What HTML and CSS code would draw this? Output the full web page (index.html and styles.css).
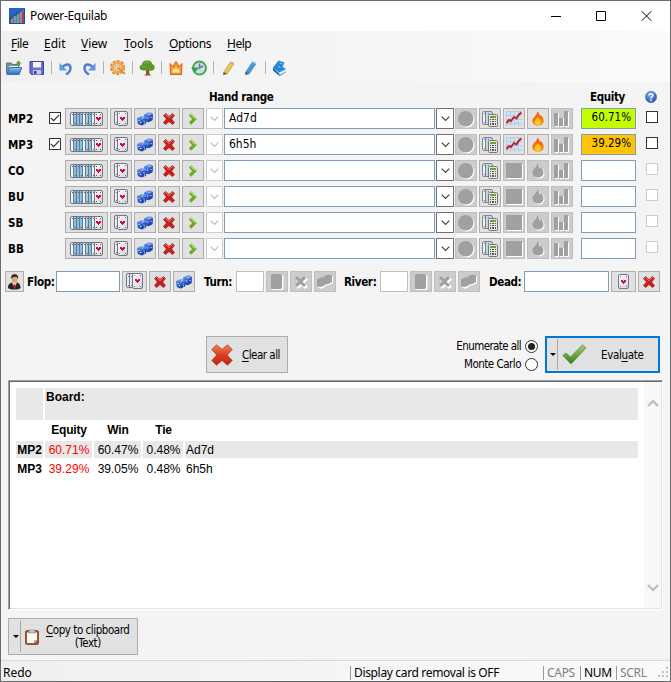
FILE: index.html
```html
<!DOCTYPE html>
<html lang="en">
<head>
<meta charset="utf-8">
<title>Power-Equilab</title>
<link rel="stylesheet" href="styles.css">
</head>
<body>
<svg class="defs" aria-hidden="true">
  <defs>
    <linearGradient id="gCard" x1="0" y1="0" x2="1" y2="1"><stop offset="0" stop-color="#fff"/><stop offset="1" stop-color="#c9d5e2"/></linearGradient>
    <linearGradient id="gRed" x1="0" y1="0" x2="0" y2="1"><stop offset="0" stop-color="#ef8356"/><stop offset=".5" stop-color="#d83f20"/><stop offset="1" stop-color="#c32410"/></linearGradient>
    <linearGradient id="gGreen" x1="0" y1="0" x2="0" y2="1"><stop offset="0" stop-color="#a5cd83"/><stop offset="1" stop-color="#357d1b"/></linearGradient>
    <linearGradient id="gFire" x1="0" y1="0" x2="0" y2="1"><stop offset="0" stop-color="#f04a10"/><stop offset="1" stop-color="#ff9a12"/></linearGradient>
    <linearGradient id="gBlue" x1="0" y1="0" x2="0" y2="1"><stop offset="0" stop-color="#8cc4f0"/><stop offset="1" stop-color="#2668b8"/></linearGradient>
    <linearGradient id="gDie" x1="0" y1="0" x2="0" y2="1"><stop offset="0" stop-color="#7fa4ee"/><stop offset=".45" stop-color="#3f6cd6"/><stop offset="1" stop-color="#1f45ae"/></linearGradient>
    <radialGradient id="gHelp" cx=".4" cy=".3" r=".8"><stop offset="0" stop-color="#7fa5ea"/><stop offset="1" stop-color="#1d47ad"/></radialGradient>
  </defs>
  <symbol id="card" viewBox="0 0 11 15"><rect x=".5" y=".5" width="10" height="14" rx="1.500" fill="url(#gCard)" stroke="#6f7787"/><path d="M3 6h2v1h1V6h2v2H7v1H6v1H5V9H4V8H3z" fill="#dc0b32"/><path d="M2 2h1v1H2zM8 2h1v1H8zM2 12h1v1H2zM8 12h1v1H8z" fill="#e04058"/></symbol>
  <symbol id="cards10" viewBox="0 0 33 14">
    <g stroke="#6f7787"><rect x=".5" y=".5" width="8" height="13" rx="1.500" fill="#f4f8fb"/><rect x="3.500" y=".5" width="8" height="13" rx="1.500" fill="#7cc4e8"/><rect x="6.500" y=".5" width="8" height="13" rx="1.500" fill="#7cc4e8"/><rect x="9.500" y=".5" width="8" height="13" rx="1.500" fill="#7cc4e8"/><rect x="12.500" y=".5" width="8" height="13" rx="1.500" fill="#eef5fa"/><rect x="15.500" y=".5" width="8" height="13" rx="1.500" fill="#9fd0ea"/><rect x="18.500" y=".5" width="8" height="13" rx="1.500" fill="#7cc4e8"/><rect x="21.500" y=".5" width="8" height="13" rx="1.500" fill="#eef5fa"/><rect x="24.500" y=".5" width="8" height="13" rx="1.500" fill="url(#gCard)"/></g>
    <path d="M2 2h1v1H2zM5 2h1v1H5zM8 2h1v1H8zM11 2h1v1h-1zM14 2h1v1h-1zM17 2h1v1h-1zM20 2h1v1h-1zM23 2h1v1h-1zM26 2h1v1h-1zM30 2h1v1h-1zM5 11h1v1H5zM11 11h1v1h-1zM17 11h1v1h-1zM23 11h1v1h-1zM26 11h1v1h-1zM30 11h1v1h-1z" fill="#a83450"/><path d="M26 5h2v1h1V5h2v2h-1v1h-1v1h-1V8h-1V7h-1z" fill="#dc0b32"/></symbol>
  <symbol id="cards2" viewBox="0 0 14 15"><rect x=".5" y=".5" width="8" height="13" rx="1.500" fill="#e6eef5" stroke="#6f7787"/><path d="M2 3h1v1H2zM2 11h1v1H2z" fill="#d05064"/><rect x="3.500" y=".5" width="10" height="14" rx="1.500" fill="url(#gCard)" stroke="#6f7787"/><path d="M6 6h2v1h1V6h2v2h-1v1H9v1H8V9H7V8H6z" fill="#dc0b32"/><path d="M5 2h1v1H5zM11 2h1v1h-1zM5 12h1v1H5zM11 12h1v1h-1z" fill="#e04058"/></symbol>
  <symbol id="cards3" viewBox="0 0 17 16"><rect x=".5" y=".5" width="8" height="14" rx="1.500" fill="#e6eef5" stroke="#6f7787"/><rect x="3.500" y=".5" width="8" height="14" rx="1.500" fill="#e6eef5" stroke="#6f7787"/><path d="M2 3h1v1H2zM5 3h1v1H5zM2 12h1v1H2zM5 12h1v1H5z" fill="#d05064"/><rect x="6.500" y=".5" width="10" height="15" rx="1.500" fill="url(#gCard)" stroke="#6f7787"/><path d="M9 6h2v1h1V6h2v2h-1v1h-1v1h-1V9h-1V8H9z" fill="#dc0b32"/><path d="M8 2h1v1H8zM14 2h1v1h-1zM8 13h1v1H8zM14 13h1v1h-1z" fill="#e04058"/></symbol>
  <symbol id="dice" viewBox="0 0 16 14"><path d="M7 2.500L11.500.3l3.500.4 1 1.500-.5 6-4 2L7.500 9z" fill="url(#gDie)"/><path d="M12.500 4L16 2l-.5 6-3.500 2z" fill="#183a9a" opacity=".6"/><path d="M0 6l4.500-2L9 5l1 1.500-1 5-4.500 2L.8 12z" fill="url(#gDie)"/><path d="M5.500 8L10 6l-1 5.500-4 2z" fill="#183a9a" opacity=".55"/><path d="M1.500 8h1v1h-1zM3 10h1v1H3zM6.500 8.500h1v1h-1zM7 10.500h1v1H7zM10 5.500h1v1h-1zM13.500 5h1v1h-1zM11.500 2h1v1h-1zM5 5.500h1v1H5z" fill="#eef3ff"/></symbol>
  <symbol id="x" viewBox="0 0 12 12"><path d="M2.500.5L6 3.500 9.500.5l2 2L8.500 6l3 3.500-2 2L6 8.500l-3.500 3-2-2L3.500 6l-3-3.500z" fill="#cd1c1c" stroke="#a31212" stroke-width=".7"/><path d="M1.500 2.500l1-1L6 4.700l3.500-3.200 1 1" fill="none" stroke="#ee8b82" stroke-width=".8"/></symbol>
  <symbol id="chev" viewBox="0 0 9 12"><path d="M1 1.500L5.500 6 1 10.500" fill="none" stroke="#6aab24" stroke-width="3.200"/><path d="M1.500 1L6 5.200" stroke="#afd878" stroke-width="1.200"/></symbol>
  <symbol id="down" viewBox="0 0 9 6"><path d="M.7.7l3.800 3.800L8.300.7" fill="none" stroke="currentColor" stroke-width="1.200"/></symbol>
  <symbol id="disc" viewBox="0 0 17 17"><circle cx="8.800" cy="8.800" r="7.700" fill="#fff"/><circle cx="7.700" cy="7.700" r="7.700" fill="#a0a0a0"/></symbol>
  <symbol id="calc" viewBox="0 0 17 16"><rect x=".5" y=".5" width="6" height="13" rx="1.500" fill="#edf2f6" stroke="#80868e"/><rect x="3.500" y=".5" width="7" height="13" rx="1.500" fill="#b7d9ea" stroke="#80868e"/><path d="M2 2h1v1H2zM2 11h1v1H2zM6 2h1v1H6z" fill="#d4596a"/><rect x="6.500" y="3.500" width="9" height="12" rx="1" fill="#e8e8e2" stroke="#777"/><path d="M8 5h6v2H8z" fill="#6ba52e"/><path d="M8 8h1v1H8zM10 8h2v1h-2zM13 8h1v1h-1zM8 10h1v1H8zM10 10h2v1h-2zM13 10h1v1h-1zM8 12h1v2H8zM10 12h2v2h-2zM13 12h1v2h-1z" fill="#555"/></symbol>
  <symbol id="chart" viewBox="0 0 16 15"><path d="M0 0h16v15H0z" fill="#d3e2f2"/><path d="M0 .5h16M0 4.500h16M0 8.500h16M0 12.500h16M.5 0v15M4.500 0v15M8.500 0v15M12.500 0v15" stroke="#b4c9e0" stroke-width=".9"/><path d="M.5 12l2.500-3 2 1 3-4 2.500 1.500L13 3.500l2.500-2" fill="none" stroke="#bb2429" stroke-width="2"/></symbol>
  <symbol id="fire" viewBox="0 0 12 15"><path d="M5.500.3c.8 1.700 2.200 2.500 2.300 5L9 4c.4 1.300 2.700 2.500 2.700 6 0 2.800-2.500 4.700-5.700 4.700S.3 12.800.3 10c0-4 4.700-4.500 5.200-9.700z" fill="url(#gFire)"/><path d="M5.500 6c1 1.500 3.500 2.500 3.500 5 0 1.800-1.200 3-3 3s-3.200-1-3.200-3c0-2.200 2.200-2.800 2.700-5z" fill="#ffcd22"/></symbol>
  <symbol id="square0" viewBox="0 0 17 16"><path d="M1 1h16v15H1z" fill="#fff"/><path d="M0 0h16v15H0z" fill="#a0a0a0"/></symbol>
  <symbol id="fire0" viewBox="0 0 13 16"><path d="M6.500 1.500c1 2 2 2.500 2.300 4.500l1.700-1c.5 1.500 2 2.500 2 5.500 0 3-2.500 5-5.500 5S1.500 13.500 1.500 10.500c0-4 4.500-4.500 5-9z" fill="#fff"/><path d="M5.500.3c1.200 1.700 2 3 2 5.500L9.500 4c.3 2 2 2.500 2 5.500 0 3-2.500 5-5.500 5S.5 12.500.5 9.500c0-4 4.500-4.500 5-9.200z" fill="#a0a0a0"/></symbol>
  <symbol id="bars0" viewBox="0 0 16 16"><path d="M1 2h4v14H1zM6 7h4v9H6zM11 1h4v15h-4z" fill="#fff"/><path d="M0 2h4v13H0zM5 7h4v8H5zM10 0h4v15h-4z" fill="#a0a0a0"/></symbol>
  <symbol id="card0" viewBox="0 0 13 16"><rect x="1" y="1" width="11.500" height="15" rx="2" fill="#fff"/><rect x="0" y="0" width="11" height="15" rx="2" fill="#a0a0a0"/></symbol>
  <symbol id="x0" viewBox="0 0 14 14"><path d="M3 1l3.500 3L10 1l3 2.500L9.500 7l3.500 3.500-3 2.500-3.500-3L3 13l-2-2.500L4.500 7 1 3.500z" fill="#fff" transform="translate(1 1)"/><path d="M3 1l3.500 3L10 1l2 2.500L8.500 6.500 12 10l-2 2-3.500-3L3 12l-2-2 3.500-3.500L1 3.500z" fill="#a0a0a0"/></symbol>
  <symbol id="dice0" viewBox="0 0 18 15"><path d="M1 5.500l4-2h2.500L9 1.500l4-1 3 1.500v6L12.500 10 9 10.500 8 12l-4 2-3-2z" fill="#fff" transform="translate(1 1)"/><path d="M1 5.500l4-2h2.500L9 1.500l4-1 3 1.500v6L12.500 10 9 10.500 8 12l-4 1-3-1z" fill="#a0a0a0"/></symbol>
  <symbol id="tick" viewBox="0 0 10 8"><path d="M.8 3.800l2.800 2.900L9.200.8" fill="none" stroke="#333" stroke-width="1.200"/></symbol>
</svg>

<div class="window">
  <header class="titlebar">
    <svg class="logo" width="16" height="16" viewBox="0 0 16 16"><path d="M0 0h16v16H0z" fill="#1c4d9c"/><path d="M0 0h16L0 10z" fill="#2b65c0"/><path d="M1 12l4-4 3-1 3-3 4-3v14H1z" fill="#66788a"/><path d="M3 11v4M6 8v7M9 6v9M12 4v11" stroke="#9fb0b8"/><path d="M1 13h1v2H1zM13 4h2v11h-2z" fill="#b9394a"/><path d="M7 9h1v5H7z" fill="#3ba084"/></svg>
    <span class="title">Power-Equilab</span>
    <div class="winbtns">
      <svg width="10" height="10"><path d="M0 5.500h10" stroke="#000"/></svg>
      <svg width="10" height="10"><path d="M.5.5h9v9h-9z" fill="none" stroke="#000"/></svg>
      <svg width="11" height="10"><path d="M.8.3l9.400 9.400M10.200.3L.8 9.700" stroke="#000"/></svg>
    </div>
  </header>
  <nav class="menubar"><span class="m1"><u>F</u>ile</span><span class="m2"><u>E</u>dit</span><span class="m3"><u>V</u>iew</span><span class="m4"><u>T</u>ools</span><span class="m5"><u>O</u>ptions</span><span class="m6"><u>H</u>elp</span></nav>
  <div class="toolbar">
    <svg class="i16" viewBox="0 0 16 16"><path d="M.5 13V3h5l1 1.500h6V13z" fill="#7b909c" stroke="#5c7482"/><path d="M3 6h9v5H3z" fill="#eef4f8"/><path d="M.8 14.500L3.500 7.500h12.200l-2.500 7z" fill="url(#gBlue)" stroke="#3473ad"/><path d="M12.500.5l3 3H14V6h-3V3.500H9.500z" fill="#6d9c36"/></svg>
    <svg class="i16 save" viewBox="0 0 16 16"><path d="M1 1.500h13.500v13H2.500L1 13z" fill="#6a6ecb" stroke="#3b3f9e"/><path d="M4 2h8v5.500H4z" fill="#f4f5fd"/><path d="M4 10h8v4.500H4z" fill="#c8cbef"/><path d="M5 11h2.500v3H5z" fill="#3c3f8f"/></svg>
    <i class="sep"></i>
    <svg class="i16" viewBox="0 0 16 16"><path d="M4 7.500C7 3.500 12.500 3 12.500 8c0 3-2 5-4.500 6.500" fill="none" stroke="#4a80d8" stroke-width="2.500"/><path d="M1.500 3v7.500H9z" fill="#5f96e6"/></svg>
    <svg class="i16 redo" viewBox="0 0 16 16"><path d="M12 7.500C9 3.500 3.500 3 3.500 8c0 3 2 5 4.500 6.500" fill="none" stroke="#4a80d8" stroke-width="2.500"/><path d="M14.500 3v7.500H7z" fill="#5f96e6"/></svg>
    <i class="sep"></i>
    <svg class="i16" viewBox="0 0 16 16"><circle cx="7.500" cy="7.500" r="6.600" fill="none" stroke="#d6872d" stroke-width="1.800" stroke-dasharray="3 1.300"/><circle cx="7.500" cy="7.500" r="4.900" fill="#fff4dd" stroke="#efa64c" stroke-width="2.600"/><circle cx="7.500" cy="7.500" r="2.700" fill="#f4f4f4" stroke="#be762a" stroke-width=".8"/><path d="M7 7l8 7" stroke="#dd8e32" stroke-width="2"/></svg>
    <i class="sep"></i>
    <svg class="i16" viewBox="0 0 16 16"><path d="M7 8h3l.5 6 2 1.500H5L7 14z" fill="#8d562a"/><path d="M3 4.500C3 1.500 6 .2 8 .6c3-.5 5 1 5 3.400 3.600 1 3.500 6 0 6.500-2 .8-3-.5-5-.3-2.500.8-7 .3-7.500-2.500C.3 5.700 2 5 3 4.500z" fill="#5d9628"/><path d="M5 4c1-2 5-2.500 6-.5M3 7c2-1 3 0 4 0" fill="none" stroke="#85bb48"/></svg>
    <i class="sep"></i>
    <svg class="i16 crown" viewBox="0 0 16 16"><path d="M2.500 14.500L2 3.500l2.800 3L8 1.500l3.200 5 2.800-3-.5 11z" fill="#f49831" stroke="#d9601a"/><path d="M4.500 12.500c-.5-2 1-4 1-4l1 1.500L8 6.500 9.500 10l1-1.500c1 1 1.500 3 1 4z" fill="#fff0a0"/></svg>
    <svg class="i16" viewBox="0 0 16 16"><circle cx="8.500" cy="8" r="6.500" fill="#c9dce8" stroke="#4ba553" stroke-width="2"/><path d="M8.500 3.500V8l3.500-2" fill="none" stroke="#637c93" stroke-width="1.500"/><path d="M0 7.500h8L4 12.500z" fill="#35a548"/></svg>
    <i class="sep wsep"></i>
    <svg class="i16" viewBox="0 0 16 16"><path d="M3.500 12.500L10.500 2l3.200 2L7 14z" fill="#f0c544" stroke="#a99255" stroke-width=".7"/><path d="M10 2.800l1-1.500 3 1.800-1 1.500z" fill="#d8a0a0"/><path d="M3 15l.8-3L7 14z" fill="#4f4b44"/></svg>
    <svg class="i16 pen2" viewBox="0 0 16 16"><path d="M3.500 12.500L10.500 2l3.200 2L7 14z" fill="#439be4" stroke="#4279a9" stroke-width=".7"/><path d="M10 2.800l1-1.500 3 1.800-1 1.500z" fill="#82b5df"/><path d="M3 15l.8-3L7 14z" fill="#494b55"/></svg>
    <i class="sep bsep"></i>
    <svg class="i16" viewBox="0 0 16 16"><path d="M1 7.500l5.500 5.500L14 9.500v2.500l-6.500 4L1 10.500z" fill="#1667a8"/><path d="M7 12.700l7-3.200v2L7.500 15z" fill="#eef7ff"/><path d="M6.500.5L12.500 2.500 10.500 7 14 9l-7 3.500L1 7.500z" fill="#2288d6"/><path d="M7.500 3l3 1M6 6.500l2.500 1" stroke="#8fcbf3"/></svg>
  </div>

  <main class="content">
    <div class="heads"><b class="h-range">Hand range</b><b class="h-eq">Equity</b><svg width="12" height="12" viewBox="0 0 12 12"><circle cx="6" cy="6" r="5.700" fill="url(#gHelp)" stroke="#4169b6" stroke-width=".5"/><path d="M4 4.500C4 2 8 2.200 8 4.200 8 5.800 6 5.500 6 7.400M6 8.600v1.400" fill="none" stroke="#fff" stroke-width="1.500"/></svg></div>

    <div class="row"><b class="pos">MP2</b><span class="cb on"><svg><use href="#tick"/></svg></span>
      <span class="btn wide"><svg class="c10"><use href="#cards10"/></svg></span><span class="btn"><svg class="c2"><use href="#cards2"/></svg></span><span class="btn"><svg class="dice"><use href="#dice"/></svg></span><span class="btn"><svg class="x"><use href="#x"/></svg></span><span class="btn"><svg class="chev"><use href="#chev"/></svg></span><span class="drop off"><svg><use href="#down"/></svg></span><span class="field range">Ad7d</span><span class="drop"><svg><use href="#down"/></svg></span><span class="btn dis"><svg class="s17"><use href="#disc"/></svg></span><span class="btn"><svg class="calc"><use href="#calc"/></svg></span><span class="btn"><svg class="chart"><use href="#chart"/></svg></span><span class="btn"><svg class="fire"><use href="#fire"/></svg></span><span class="btn dis"><svg class="s16"><use href="#bars0"/></svg></span><span class="field eq green">60.71%</span><span class="cb last on"></span></div>
    <div class="row"><b class="pos">MP3</b><span class="cb on"><svg><use href="#tick"/></svg></span>
      <span class="btn wide"><svg class="c10"><use href="#cards10"/></svg></span><span class="btn"><svg class="c2"><use href="#cards2"/></svg></span><span class="btn"><svg class="dice"><use href="#dice"/></svg></span><span class="btn"><svg class="x"><use href="#x"/></svg></span><span class="btn"><svg class="chev"><use href="#chev"/></svg></span><span class="drop off"><svg><use href="#down"/></svg></span><span class="field range">6h5h</span><span class="drop"><svg><use href="#down"/></svg></span><span class="btn dis"><svg class="s17"><use href="#disc"/></svg></span><span class="btn"><svg class="calc"><use href="#calc"/></svg></span><span class="btn"><svg class="chart"><use href="#chart"/></svg></span><span class="btn"><svg class="fire"><use href="#fire"/></svg></span><span class="btn dis"><svg class="s16"><use href="#bars0"/></svg></span><span class="field eq orange">39.29%</span><span class="cb last on"></span></div>
    <div class="row"><b class="pos">CO</b><span class="cb none"></span>
      <span class="btn wide"><svg class="c10"><use href="#cards10"/></svg></span><span class="btn"><svg class="c2"><use href="#cards2"/></svg></span><span class="btn"><svg class="dice"><use href="#dice"/></svg></span><span class="btn"><svg class="x"><use href="#x"/></svg></span><span class="btn"><svg class="chev"><use href="#chev"/></svg></span><span class="drop off"><svg><use href="#down"/></svg></span><span class="field range"></span><span class="drop"><svg><use href="#down"/></svg></span><span class="btn dis"><svg class="s17"><use href="#disc"/></svg></span><span class="btn"><svg class="calc"><use href="#calc"/></svg></span><span class="btn dis"><svg class="sq"><use href="#square0"/></svg></span><span class="btn dis"><svg class="fire0"><use href="#fire0"/></svg></span><span class="btn dis"><svg class="s16"><use href="#bars0"/></svg></span><span class="field eq"></span><span class="cb last"></span></div>
    <div class="row"><b class="pos">BU</b><span class="cb none"></span>
      <span class="btn wide"><svg class="c10"><use href="#cards10"/></svg></span><span class="btn"><svg class="c2"><use href="#cards2"/></svg></span><span class="btn"><svg class="dice"><use href="#dice"/></svg></span><span class="btn"><svg class="x"><use href="#x"/></svg></span><span class="btn"><svg class="chev"><use href="#chev"/></svg></span><span class="drop off"><svg><use href="#down"/></svg></span><span class="field range"></span><span class="drop"><svg><use href="#down"/></svg></span><span class="btn dis"><svg class="s17"><use href="#disc"/></svg></span><span class="btn"><svg class="calc"><use href="#calc"/></svg></span><span class="btn dis"><svg class="sq"><use href="#square0"/></svg></span><span class="btn dis"><svg class="fire0"><use href="#fire0"/></svg></span><span class="btn dis"><svg class="s16"><use href="#bars0"/></svg></span><span class="field eq"></span><span class="cb last"></span></div>
    <div class="row"><b class="pos">SB</b><span class="cb none"></span>
      <span class="btn wide"><svg class="c10"><use href="#cards10"/></svg></span><span class="btn"><svg class="c2"><use href="#cards2"/></svg></span><span class="btn"><svg class="dice"><use href="#dice"/></svg></span><span class="btn"><svg class="x"><use href="#x"/></svg></span><span class="btn"><svg class="chev"><use href="#chev"/></svg></span><span class="drop off"><svg><use href="#down"/></svg></span><span class="field range"></span><span class="drop"><svg><use href="#down"/></svg></span><span class="btn dis"><svg class="s17"><use href="#disc"/></svg></span><span class="btn"><svg class="calc"><use href="#calc"/></svg></span><span class="btn dis"><svg class="sq"><use href="#square0"/></svg></span><span class="btn dis"><svg class="fire0"><use href="#fire0"/></svg></span><span class="btn dis"><svg class="s16"><use href="#bars0"/></svg></span><span class="field eq"></span><span class="cb last"></span></div>
    <div class="row"><b class="pos">BB</b><span class="cb none"></span>
      <span class="btn wide"><svg class="c10"><use href="#cards10"/></svg></span><span class="btn"><svg class="c2"><use href="#cards2"/></svg></span><span class="btn"><svg class="dice"><use href="#dice"/></svg></span><span class="btn"><svg class="x"><use href="#x"/></svg></span><span class="btn"><svg class="chev"><use href="#chev"/></svg></span><span class="drop off"><svg><use href="#down"/></svg></span><span class="field range"></span><span class="drop"><svg><use href="#down"/></svg></span><span class="btn dis"><svg class="s17"><use href="#disc"/></svg></span><span class="btn"><svg class="calc"><use href="#calc"/></svg></span><span class="btn dis"><svg class="sq"><use href="#square0"/></svg></span><span class="btn dis"><svg class="fire0"><use href="#fire0"/></svg></span><span class="btn dis"><svg class="s16"><use href="#bars0"/></svg></span><span class="field eq"></span><span class="cb last"></span></div>

    <div class="board">
      <span class="btn person"><svg class="man" viewBox="0 0 13 16"><path d="M0 14c0-4 2-5 4-5.500h5c2 .5 3.500 2 3.500 5.500-2 2-10 2-12.500 0z" fill="#252525"/><path d="M4.500 7.500h4L8.500 10l-2 3-2-3z" fill="#f4d3b8"/><path d="M6 10h1l.5 4-1 1-1-1z" fill="#c12727"/><ellipse cx="6.600" cy="5" rx="2.900" ry="3.800" fill="#dda57c"/><path d="M3.300 5C2.500 1 5 0 7 .3c3 0 3.500 2.500 2.800 4.500L8.500 2.700 5 3z" fill="#3b2518"/></svg></span>
      <b class="flop">Flop:</b><span class="field w64"></span>
      <span class="btn w25 g2"><svg class="c3s"><use href="#cards3"/></svg></span><span class="btn g2"><svg class="x"><use href="#x"/></svg></span><span class="btn g2"><svg class="dice"><use href="#dice"/></svg></span>
      <b class="turn">Turn:</b><span class="field dim w28"></span>
      <span class="btn dis g2"><svg class="k0"><use href="#card0"/></svg></span><span class="btn dis g2"><svg class="x0"><use href="#x0"/></svg></span><span class="btn dis g2"><svg class="d0"><use href="#dice0"/></svg></span>
      <b class="river">River:</b><span class="field dim w28"></span>
      <span class="btn dis g2"><svg class="k0"><use href="#card0"/></svg></span><span class="btn dis g2"><svg class="x0"><use href="#x0"/></svg></span><span class="btn dis g2"><svg class="d0"><use href="#dice0"/></svg></span>
      <b class="dead">Dead:</b><span class="field w85"></span>
      <span class="btn w25 g2"><svg class="c1s"><use href="#card"/></svg></span><span class="btn g2"><svg class="x"><use href="#x"/></svg></span>
    </div>

    <div class="actions">
      <span class="big clear"><svg width="22" height="22" viewBox="0 0 22 22"><path d="M5.500.8L11 5.500 16.500.8l4.700 4.700-5 5.500 5 5.500-4.700 4.700L11 16.500l-5.500 4.700-4.700-4.700 5-5.500-5-5.500z" fill="url(#gRed)" stroke="#b93b20" stroke-width=".8"/></svg><span><u>C</u>lear all</span></span>
      <div class="modes"><label><span class="enum">Enumerate all</span><i class="radio sel"></i></label><label><span class="monte">Monte Carlo</span><i class="radio"></i></label></div>
      <span class="big eval"><i class="arrow"></i><i class="split"></i><svg width="25" height="21" viewBox="0 0 25 21"><path d="M.8 11.500L4 9l4.500 4L20.500.8 24 4 9 20z" fill="url(#gGreen)" stroke="#518a34" stroke-width=".7"/></svg><span>Eval<u>u</u>ate</span></span>
    </div>

    <section class="report">
      <div class="sheet">
        <div class="trow brow"><b class="c0 g"></b><b class="cw g">Board:</b></div>
        <div class="trow hrow"><b class="c0"></b><b class="c1">Equity</b><b class="c2x">Win</b><b class="c3">Tie</b></div>
        <div class="trow"><b class="c0 g">MP2</b><span class="c1 g red">60.71%</span><span class="c2x g">60.47%</span><span class="c3 g">0.48%</span><span class="c4 g">Ad7d</span></div>
        <div class="trow"><b class="c0">MP3</b><span class="c1 red">39.29%</span><span class="c2x">39.05%</span><span class="c3">0.48%</span><span class="c4">6h5h</span></div>
      </div>
      <div class="scroll"><svg width="12" height="8" viewBox="0 0 12 8"><path d="M1 7l5-5 5 5" fill="none" stroke="#bfbfbf" stroke-width="2.400"/></svg><svg width="12" height="8" viewBox="0 0 12 8"><path d="M1 1l5 5 5-5" fill="none" stroke="#bfbfbf" stroke-width="2.400"/></svg></div>
    </section>

    <span class="big copy"><i class="arrow"></i><i class="split"></i><svg width="14" height="16" viewBox="0 0 14 16"><rect x=".5" y="1.500" width="13" height="14" rx="1.500" fill="#a65a28" stroke="#8a5330"/><path d="M2 3.500h10V11l-3 3H2z" fill="#f7f7f7"/><path d="M12 11l-3 3v-3z" fill="#b9b9b9"/><path d="M4 1h6v3H4z" fill="#ccc" stroke="#888" stroke-width=".7"/></svg><span class="lines"><span class="l1"><u>C</u>opy to clipboard</span><span class="l2">(Text)</span></span></span>
  </main>

  <footer class="status"><span class="s-main">Redo</span><span class="s-card">Display card removal is OFF</span><span class="s-caps">CAPS</span><span class="s-num">NUM</span><span class="s-scrl">SCRL</span><svg width="11" height="11" viewBox="0 0 11 11"><path d="M8 0h2v2H8zM4 4h2v2H4zM8 4h2v2H8zM0 8h2v2H0zM4 8h2v2H4zM8 8h2v2H8z" fill="#bfbfbf"/></svg></footer>
</div>
</body>
</html>
```
FILE: styles.css
```css
* { box-sizing: border-box; }
body { margin: 0; background: #f4f4f4; color: #000; font: 11.5px/14px "DejaVu Sans Condensed", "DejaVu Sans", sans-serif; }
svg { display: block; flex: none; }
i, u { font-style: normal; }
u { text-underline-offset: 2px; text-decoration-thickness: 1px; }
b { letter-spacing: -.35px; }
.defs { position: absolute; width: 0; height: 0; }
.window { width: 671px; height: 682px; border: 1px solid #6b6b6b; display: flex; flex-direction: column; background: #f4f4f4; white-space: nowrap; overflow: hidden; }

.titlebar { height: 30px; background: #fff; display: flex; align-items: center; padding-left: 8px; font: 12px/16px "Noto Sans", sans-serif; }
.title { margin-left: 5px; letter-spacing: -.3px; }
.winbtns { margin-left: auto; margin-right: 18px; display: flex; gap: 35px; align-items: center; }

.menubar { height: 26px; background: linear-gradient(90deg, #f0f0f0, #fafafa); display: flex; padding-left: 10px; font: 12px/26px "Noto Sans", sans-serif; }
.menubar span { flex: none; }
.m1 { width: 33px; letter-spacing: -.5px; } .m2 { width: 37px; } .m3 { width: 43px; } .m4 { width: 45px; } .m5 { width: 58px; letter-spacing: -.35px; } .m6 { letter-spacing: -.5px; }

.toolbar { height: 25px; background: linear-gradient(90deg, #f0f0f0, #fafafa); display: flex; align-items: center; padding: 0 0 4px 5px; }
.i16 { width: 16px; height: 16px; }
.save { margin-left: 7px; }
.sep { width: 1px; height: 13px; background: #b4b4b4; margin: 0 6px; }
.redo { margin-left: 7px; }
.crown + .i16 { margin-left: 7px; }
.pen2 { margin-left: 6px; }
.bsep { margin-left: 7px; }

.heads { height: 26px; display: flex; align-items: center; padding: 4px 0 0 208px; }
.h-range { width: 381px; } .h-eq { width: 55px; }

.row { height: 21px; margin-bottom: 5px; display: flex; padding-left: 7px; }
.pos { width: 41px; line-height: 22px; flex: none; letter-spacing: 0; }
.cb { width: 12px; height: 12px; margin-top: 4px; margin-right: 4px; border: 1px solid #ccc; background: #fff; flex: none; display: flex; align-items: center; justify-content: center; }
.cb.on { border-color: #333; }
.cb.none { visibility: hidden; }
.cb svg { width: 10px; height: 8px; }
.cb.last { margin: 3px 0 0 10px; }
.btn { width: 22px; height: 21px; border: 1px solid #adadad; background: #e1e1e1; display: flex; align-items: flex-start; justify-content: center; flex: none; margin-right: 2px; }
.btn.dis { background: #ccc; border-color: #bfbfbf; }
.btn.wide { width: 43px; }
.drop { width: 18px; border: 1px solid #707070; background: #fff; color: #444; display: flex; align-items: center; justify-content: center; flex: none; margin: 0 1px; }
.drop.off { width: 17px; margin: 0 1px 0 0; border-color: #ccc; color: #bbb; }
.drop svg { width: 9px; height: 6px; }
.field { border: 1px solid #7f9db9; background: #fff; height: 21px; flex: none; }
.range { width: 211px; padding-left: 4px; line-height: 18px; font-size: 12px; }
.eq { width: 55px; margin-left: 6px; padding-right: 4px; text-align: right; line-height: 17px; }
.green { background: #c3ff00; }
.orange { background: #ffc400; }
.c10 { width: 33px; height: 14px; margin-top: 3px; }
.c2 { width: 14px; height: 15px; margin-top: 2px; }
.dice { width: 16px; height: 14px; margin-top: 3px; }
.x { width: 12px; height: 12px; margin-top: 4px; }
.chev { width: 9px; height: 12px; margin: 4px 0 0 1px; }
.s17 { width: 17px; height: 17px; margin: 2px 0 0 1px; }
.calc { width: 17px; height: 16px; margin: 2px 0 0 1px; }
.chart { width: 16px; height: 15px; margin-top: 2px; }
.fire { width: 12px; height: 15px; margin-top: 2px; }
.s16 { width: 16px; height: 16px; margin-top: 2px; }
.sq { width: 17px; height: 16px; margin: 2px 0 0 1px; }
.fire0 { width: 13px; height: 16px; margin: 2px 0 0 1px; }
.k0 { width: 13px; height: 16px; margin: 2px 0 0 1px; }
.x0 { width: 14px; height: 14px; margin-top: 3px; }
.d0 { width: 18px; height: 15px; margin-top: 2px; }
.man { width: 13px; height: 16px; margin-top: 2px; }
.c3s { width: 17px; height: 16px; margin-top: 1px; }
.c1s { width: 11px; height: 15px; margin-top: 2px; }

.board { height: 21px; margin-top: 12px; padding-left: 4px; display: flex; line-height: 22px; }
.board .btn { margin-right: 0; }
.board b { flex: none; }
.board .person { width: 19px; }
.board .g2 { margin-left: 2px; }
.board .w25 { width: 25px; } .w64 { width: 64px; } .w28 { width: 28px; } .w85 { width: 85px; }
.dim { border-color: #bfbfbf; }
.flop { width: 29px; margin-left: 3px; } .turn { width: 32px; margin-left: 9px; }
.river { width: 36px; margin-left: 8px; } .dead { width: 35px; margin-left: 9px; }

.actions { margin-top: 44px; height: 37px; display: flex; padding-left: 205px; letter-spacing: -.5px; }
.big { display: flex; align-items: center; height: 37px; border: 1px solid #adadad; background: #e1e1e1; flex: none; }
.clear { width: 82px; padding-left: 4px; }
.clear > span { margin-left: 9px; }
.modes { width: 250px; padding-top: 1px; display: flex; flex-direction: column; }
.modes label { height: 19px; display: flex; align-items: center; justify-content: flex-end; gap: 4px; }
.enum { letter-spacing: -.6px; }
.radio { width: 13px; height: 13px; border: 1px solid #333; border-radius: 50%; background: #fff; display: flex; }
.sel::after { content: ""; width: 7px; height: 7px; margin: 2px; border-radius: 50%; background: #222; }
.eval { width: 115px; margin-left: 7px; border: 2px solid #0078d7; padding-left: 3px; }
.arrow { border: 3px solid transparent; border-top-color: #000; border-bottom: 0; width: 6px; height: 3px; }
.split { width: 1px; height: 31px; background: #aca899; margin-left: 1px; }
.eval svg { margin-left: 4px; } .eval > span { margin-left: 14px; letter-spacing: -.35px; }

.report { margin: 7px 0 0 7px; width: 655px; height: 230px; border: 1px solid; border-color: #a0a0a0 #fff #fff #a0a0a0; box-shadow: inset 1px 1px #696969, inset -1px -1px #e3e3e3; background: #fff; display: flex; font: 12px/17px "Liberation Sans", sans-serif; padding: 1px; }
.sheet { width: 634px; padding: 6px 0 0 6px; }
.sheet b { letter-spacing: 0; }
.trow { display: flex; gap: 2px; height: 17px; margin-bottom: 2px; }
.trow > * { flex: none; }
.brow { height: 32px; margin-bottom: 1px; line-height: 18px; }
.hrow { height: 18px; line-height: 20px; text-align: center; }
.sheet .hrow b { letter-spacing: -.2px; }
.g { background: #e8e8e8; }
.c0 { width: 27px; text-align: center; } .cw { width: 593px; padding-left: 1px; }
.c1 { width: 47px; padding-left: 1px; text-align: center; } .c2x { width: 47px; padding-left: 1px; text-align: center; } .c3 { width: 40px; padding-left: 1px; text-align: center; } .c4 { width: 453px; padding-left: 1px; }
.trow { line-height: 18px; }
.red { color: #f00; }
.scroll { width: 17px; background: #f8f8f8; display: flex; flex-direction: column; justify-content: space-between; align-items: center; padding: 17px 0 16px; }

.copy { width: 130px; margin: 8px 0 0 7px; padding-left: 4px; letter-spacing: -.45px; }
.copy svg { margin-left: 4px; }
.lines { display: flex; flex-direction: column; align-items: center; line-height: 13px; margin-left: 7px; }

.status { margin-top: auto; height: 21px; border-top: 1px solid #d9d9d9; background: linear-gradient(90deg, #f0f0f0, #fafafa); display: flex; align-items: center; font: 12px/20px "Noto Sans", sans-serif; padding: 3px 0 0 2px; }
.status span { flex: none; height: 14px; line-height: 14px; }
.s-main { width: 347px; }
.s-card { width: 193px; border-left: 1px solid #999; padding-left: 3px; letter-spacing: -.34px; }
.s-caps, .s-num, .s-scrl { border-left: 1px solid #999; padding-left: 3px; letter-spacing: -.3px; }
.s-caps, .s-scrl { color: #808080; }
.s-caps { width: 37px; } .s-num { width: 36px; } .s-scrl { width: 42px; }
```
